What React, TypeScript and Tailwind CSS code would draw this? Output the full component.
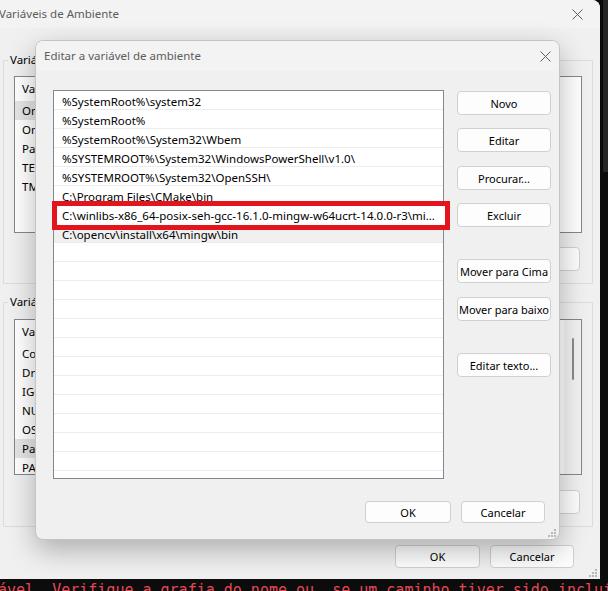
import type { ReactNode } from "react";

const paths = [
  "%SystemRoot%\\system32",
  "%SystemRoot%",
  "%SystemRoot%\\System32\\Wbem",
  "%SYSTEMROOT%\\System32\\WindowsPowerShell\\v1.0\\",
  "%SYSTEMROOT%\\System32\\OpenSSH\\",
  "C:\\Program Files\\CMake\\bin",
  "C:\\winlibs-x86_64-posix-seh-gcc-16.1.0-mingw-w64ucrt-14.0.0-r3\\mingw64\\bin",
  "C:\\opencv\\install\\x64\\mingw\\bin",
];

const userVars = ["OneDrive", "OneDriveConsumer", "Path", "TEMP", "TMP"];
const systemVars = ["ComSpec", "DriverData", "IGCCSVC_DB", "NUMBER_OF_PROCESSORS", "OS", "Path", "PATHEXT"];

function CloseIcon() {
  return (
    <svg width="11" height="11" viewBox="0 0 11 11" className="text-[#606060]">
      <path d="M0.5 0.5L10.5 10.5M10.5 0.5L0.5 10.5" stroke="currentColor" strokeWidth="1" fill="none" />
    </svg>
  );
}

// little dotted triangle in the lower right corner of a resizable window
function Grip() {
  const dots = [
    [6, 0],
    [3, 3],
    [6, 3],
    [0, 6],
    [3, 6],
    [6, 6],
  ];
  return (
    <svg width="8" height="8" viewBox="0 0 8 8">
      {dots.map(([x, y]) => (
        <rect key={`${x}-${y}`} x={x} y={y} width="2" height="2" fill="#b8b8b8" />
      ))}
    </svg>
  );
}

function Btn({ children, className = "" }: { children: ReactNode; className?: string }) {
  return (
    <button
      type="button"
      className={`flex shrink-0 items-center justify-center whitespace-nowrap rounded-[4px] border border-[#d0d0d0] bg-[#fdfdfd] text-[11px] leading-none text-black ${className}`}
    >
      {children}
    </button>
  );
}

function VarList({ rows, selected, height, scroll }: { rows: string[]; selected: number; height: string; scroll?: boolean }) {
  return (
    <div className={`flex overflow-hidden border border-[#828790] bg-white ${height}`}>
      <div className="flex-1">
        <div className="flex h-[24px] items-center pl-[7px]">Variável</div>
        {rows.map((r, i) => (
          <div key={r + i} className="flex h-[19px] items-center">
            <div className={`flex h-full w-[150px] items-center pl-[7px] ${i === selected ? "bg-[#e5e5e5]" : ""}`}>{r}</div>
          </div>
        ))}
      </div>
      {scroll && (
        <div className="flex w-[17px] justify-center bg-[#f2f2f2] pt-[18px]">
          <div className="h-[42px] w-[2px] rounded-full bg-[#8a8a8a]" />
        </div>
      )}
    </div>
  );
}

function BackWindow() {
  return (
    <div className="absolute left-[-12px] top-0 flex h-[579px] w-[612px] flex-col rounded-tr-[8px] bg-[#f0f0f0]">
      <div className="flex h-[28px] items-center justify-between rounded-tr-[8px] bg-[#f3f3f3] pl-[11px] pr-[17px]">
        <span className="text-[#5c5c5c]">Variáveis de Ambiente</span>
        <CloseIcon />
      </div>
      <div className="flex flex-1 flex-col pl-[15px] pr-[7px] pt-[24px]">
        <fieldset className="border border-[#dcdcdc] px-[10px] pb-[12px]">
          <legend className="ml-[-6px] px-[2px] leading-[16px]">Variáveis de usuário</legend>
          <div className="mt-[8px]">
            <VarList rows={userVars} selected={0} height="h-[157px]" />
          </div>
          <div className="mr-[2px] mt-[14px] flex justify-end gap-[10px]">
            <Btn className="h-[24px] w-[85px]">Novo...</Btn>
            <Btn className="h-[24px] w-[85px]">Editar...</Btn>
            <Btn className="h-[24px] w-[85px]">Excluir</Btn>
          </div>
        </fieldset>
        <fieldset className="mt-[10px] border border-[#dcdcdc] px-[10px] pb-[12px]">
          <legend className="ml-[-6px] px-[2px] leading-[16px]">Variáveis do sistema</legend>
          <div className="mt-[9px]">
            <VarList rows={systemVars} selected={5} height="h-[156px]" scroll />
          </div>
          <div className="mr-[2px] mt-[15px] flex justify-end gap-[10px]">
            <Btn className="h-[24px] w-[85px]">Novo...</Btn>
            <Btn className="h-[24px] w-[85px]">Editar...</Btn>
            <Btn className="h-[24px] w-[85px]">Excluir</Btn>
          </div>
        </fieldset>
        <div className="mr-[19px] mt-[18px] flex justify-end gap-[10px]">
          <Btn className="h-[23px] w-[85px] bg-[#f8f8f8]">OK</Btn>
          <Btn className="h-[23px] w-[84px] bg-[#f8f8f8]">Cancelar</Btn>
        </div>
      </div>
      <div className="absolute bottom-[2px] right-[3px]">
        <Grip />
      </div>
    </div>
  );
}

function EditDialog() {
  const empty = Array.from({ length: 13 }, (_, i) => i);
  return (
    <div className="absolute left-[35px] top-[40px] flex h-[500px] w-[525px] flex-col overflow-hidden rounded-[8px] border border-[#c4c4c4] bg-[#f0f0f0] shadow-[0_10px_28px_rgba(0,0,0,0.28)]">
      <div className="flex h-[30px] shrink-0 items-center justify-between bg-[#f3f3f3] pl-[8px] pr-[8px]">
        <span className="text-[#5c5c5c]">Editar a variável de ambiente</span>
        <CloseIcon />
      </div>
      <div className="flex flex-1 flex-col pl-[17px] pr-[8px] pt-[19px]">
        <div className="flex gap-[13px]">
          <div className="relative h-[389px] w-[391px] shrink-0 border border-[#828790] bg-white">
            <div className="h-full overflow-hidden">
              {paths.map((p, i) => (
                <div
                  key={p}
                  className={`flex h-[19px] items-center border-b border-[#ececec] pl-[8px] pt-[3px] ${i === 7 ? "bg-[#f0f0f0]" : ""}`}
                >
                  <span className="truncate pr-[4px]">{p}</span>
                </div>
              ))}
              {empty.map((i) => (
                <div key={i} className="h-[19px] border-b border-[#ececec]" />
              ))}
            </div>
            {/* in-place edit of the selected entry, marked in red */}
            <div className="absolute left-[-2px] top-[110px] flex h-[29px] w-[398px] items-center border-[5px] border-[#e3141c] bg-white pl-[5px] pr-[4px]">
              <span className="truncate">{paths[6]}</span>
            </div>
          </div>
          <div className="mt-[1px] flex w-[94px] flex-col">
            <Btn className="h-[24px]">Novo</Btn>
            <Btn className="mt-[13px] h-[24px]">Editar</Btn>
            <Btn className="mt-[14px] h-[24px]">Procurar...</Btn>
            <Btn className="mt-[13px] h-[24px]">Excluir</Btn>
            <Btn className="mt-[32px] h-[24px]">Mover para Cima</Btn>
            <Btn className="mt-[14px] h-[24px]">Mover para baixo</Btn>
            <Btn className="mt-[32px] h-[24px]">Editar texto...</Btn>
          </div>
        </div>
        <div className="mr-[6px] mt-[22px] flex justify-end gap-[10px]">
          <Btn className="h-[22px] w-[86px]">OK</Btn>
          <Btn className="h-[22px] w-[84px]">Cancelar</Btn>
        </div>
      </div>
      <div className="absolute bottom-[2px] right-[3px]">
        <Grip />
      </div>
    </div>
  );
}

export default function App() {
  return (
    <div className="relative h-[591px] w-[608px] overflow-hidden bg-[#0c0c0c] font-['Noto_Sans',sans-serif] text-[11.5px] text-black">
      {/* console behind the dialogs */}
      <div className="absolute right-0 top-0 h-[172px] w-[5px] bg-[#262626]" />
      <div className="absolute left-[-2px] top-[580px] whitespace-pre font-['DejaVu_Sans_Mono',monospace] text-[15px] leading-[20px] text-[#e74856]">
        ável. Verifique a grafia do nome ou, se um caminho tiver sido incluído
      </div>
      <BackWindow />
      <EditDialog />
    </div>
  );
}
